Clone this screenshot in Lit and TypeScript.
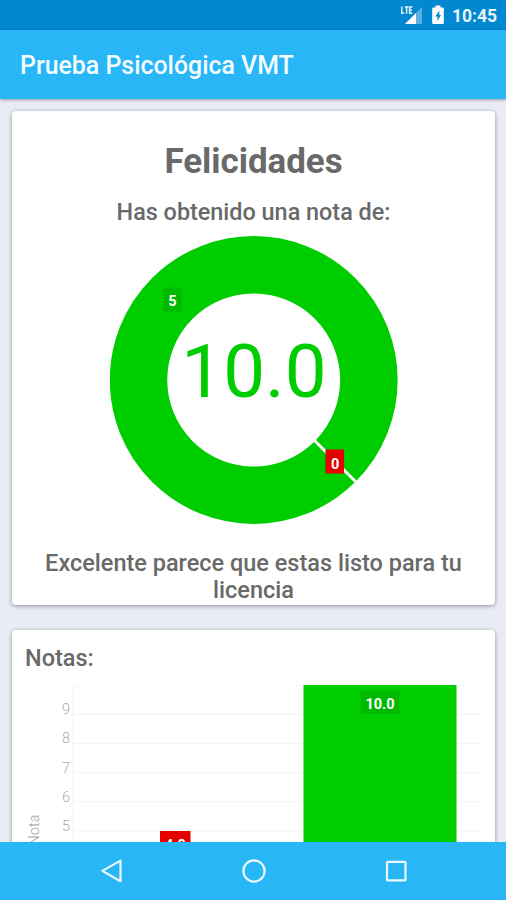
import { LitElement, html, svg, css } from "lit";
import { customElement } from "lit/decorators.js";

@customElement("status-bar")
class StatusBar extends LitElement {
  static styles = css`
    :host { display: flex; align-items: center; height: 30px; flex: none; background: #0288d1; color: #e8f6ff; padding-right: 9px; justify-content: flex-end; }
    .signal { width: 22px; height: 22px; margin-right: 10px; }
    .battery { width: 12px; height: 20px; margin-right: 8px; }
    .time { font-size: 17.5px; font-weight: 700; line-height: 30px; padding-top: 2px; }
  `;
  render() {
    return html`
      <svg class="signal" viewBox="0 0 22 22">
        <path d="M22 3V20H5Z" fill="#fff" opacity=".35" />
        <path d="M16 9V20H5Z" fill="#fff" />
        <path d="M1.8 2.5V9.2H4.2 M4.8 3H8.4 M6.6 3V9.7 M12.4 3H9.6V9.2H12.4 M9.6 6H12" fill="none" stroke="#e3f4ff" stroke-width="1.5" />
      </svg>
      <svg class="battery" viewBox="0 0 12 20">
        <path d="M3.5 .5H8.5V2.5H10.7Q11.8 2.5 11.8 3.5V18Q11.8 19 10.7 19H1.3Q.2 19 .2 18V3.5Q.2 2.5 1.3 2.5H3.5Z" fill="#fff" />
        <path d="M7.3 5.8L3.2 11.5H5.5V16L9 10H7.3Z" fill="#0288d1" />
      </svg>
      <span class="time">10:45</span>
    `;
  }
}

@customElement("score-donut")
class ScoreDonut extends LitElement {
  static styles = css`
    :host { display: block; width: 288px; height: 288px; font-weight: 400; }
    svg { display: block; }
    .total { font-size: 74.5px; fill: #00cd00; text-anchor: middle; }
    .value { font-size: 14.5px; font-weight: 700; fill: #fff; text-anchor: middle; }
  `;
  render() {
    return html`
      <svg width="288" height="288" viewBox="0 0 288 288">
        <circle cx="143.7" cy="144" r="115.2" fill="none" stroke="#00cd00" stroke-width="57.5" />
        <path d="M204 204L247 247" stroke="#fff" stroke-width="3" />
        <rect x="53.5" y="51.5" width="18" height="24" fill="#00b900" />
        <text class="value" x="62.5" y="69.5">5</text>
        <rect x="215.5" y="213.5" width="18.5" height="24" fill="#e60000" />
        <text class="value" x="225.2" y="232.5">0</text>
        <text class="total" x="144" y="161">10.0</text>
      </svg>
    `;
  }
}

@customElement("score-bars")
class ScoreBars extends LitElement {
  static styles = css`
    :host { display: block; }
    svg { display: block; overflow: visible; }
    .tick { font-size: 14.5px; font-weight: 300; fill: #ababab; text-anchor: end; }
    .axis { font-size: 14.5px; font-weight: 300; fill: #a4a4a4; text-anchor: middle; }
    .value { font-size: 14.5px; font-weight: 700; fill: #fff; text-anchor: middle; }
  `;
  render() {
    const step = 29.2;
    const ticks = [9, 8, 7, 6, 5];
    return html`
      <svg width="482" height="320" viewBox="0 0 482 320">
        <path d="M61 .5H469" stroke="#fafafa" />
        <path d="M61 0V292" stroke="#f0f0f0" />
        ${ticks.map((t) => {
          const y = (10 - t) * step;
          return svg`<path d="M61 ${y}H471" stroke="#f3f3f3" /><text class="tick" x="58" y=${y}>${t}</text>`;
        })}
        <text class="axis" transform="translate(27 145) rotate(-90)">Nota</text>
        <rect x="291.5" y="0" width="153" height="292" fill="#00cd00" />
        <rect x="348.5" y="6" width="39" height="23" fill="#00b900" />
        <text class="value" x="368" y="24.3">10.0</text>
        <rect x="148" y="146" width="30.5" height="24" fill="#e60000" />
        <text class="value" x="163.3" y="165">4.8</text>
      </svg>
    `;
  }
}

@customElement("app-root")
class AppRoot extends LitElement {
  static styles = css`
    :host { display: flex; flex-direction: column; width: 506px; height: 900px; overflow: hidden; font-family: Roboto, "Noto Sans", sans-serif; background: #e9ecf4; color: #696969; }
    .bar { display: flex; align-items: center; height: 69px; flex: none; padding-left: 20px; box-sizing: border-box; background: #29b6f6; color: #f4fcff; font-size: 24.9px; font-weight: 500; box-shadow: 0 1px 3px rgba(0,0,0,.35); z-index: 1; padding-top: 2px; }
    .content { flex: 1; min-height: 0; overflow: hidden; padding: 12px 11px 0 12px; display: flex; flex-direction: column; gap: 25px; }
    .card { flex: none; background: #fff; border-radius: 4px; box-shadow: 0 1px 4px rgba(0,0,0,.38); }
    .result { height: 494px; display: flex; flex-direction: column; align-items: center; text-align: center; font-weight: 500; }
    .heading { font-size: 34.9px; line-height: 42px; margin-top: 30px; font-weight: 700; }
    .sub { font-size: 23.4px; line-height: 28px; margin: 15px 0 10px; }
    .message { font-size: 23.5px; line-height: 27px; margin: 26px 20px 0; }
    .notes { height: 380px; }
    .label { font-size: 23.5px; line-height: 28px; font-weight: 500; padding: 14px 0 13px 13px; }
    .nav { height: 58px; flex: none; background: #29b6f6; display: flex; justify-content: center; align-items: center; gap: 118px; padding-left: 1px; z-index: 1; }
    .nav svg { width: 24px; height: 24px; fill: none; stroke: #e9faff; stroke-width: 2.2; stroke-linejoin: round; }
  `;
  render() {
    return html`
      <status-bar></status-bar>
      <div class="bar">Prueba Psicológica VMT</div>
      <div class="content">
        <div class="card result">
          <div class="heading">Felicidades</div>
          <div class="sub">Has obtenido una nota de:</div>
          <score-donut></score-donut>
          <div class="message">Excelente parece que estas listo para tu licencia</div>
        </div>
        <div class="card notes">
          <div class="label">Notas:</div>
          <score-bars></score-bars>
        </div>
      </div>
      <div class="nav">
        <svg viewBox="0 0 24 24"><path d="M20.5 1.6V22.2L2.3 11.9Z" /></svg>
        <svg viewBox="0 0 24 24"><circle cx="12" cy="12" r="10.6" /></svg>
        <svg viewBox="0 0 24 24"><rect x="3" y="2.8" width="18.5" height="18.5" rx=".6" /></svg>
      </div>
    `;
  }
}
